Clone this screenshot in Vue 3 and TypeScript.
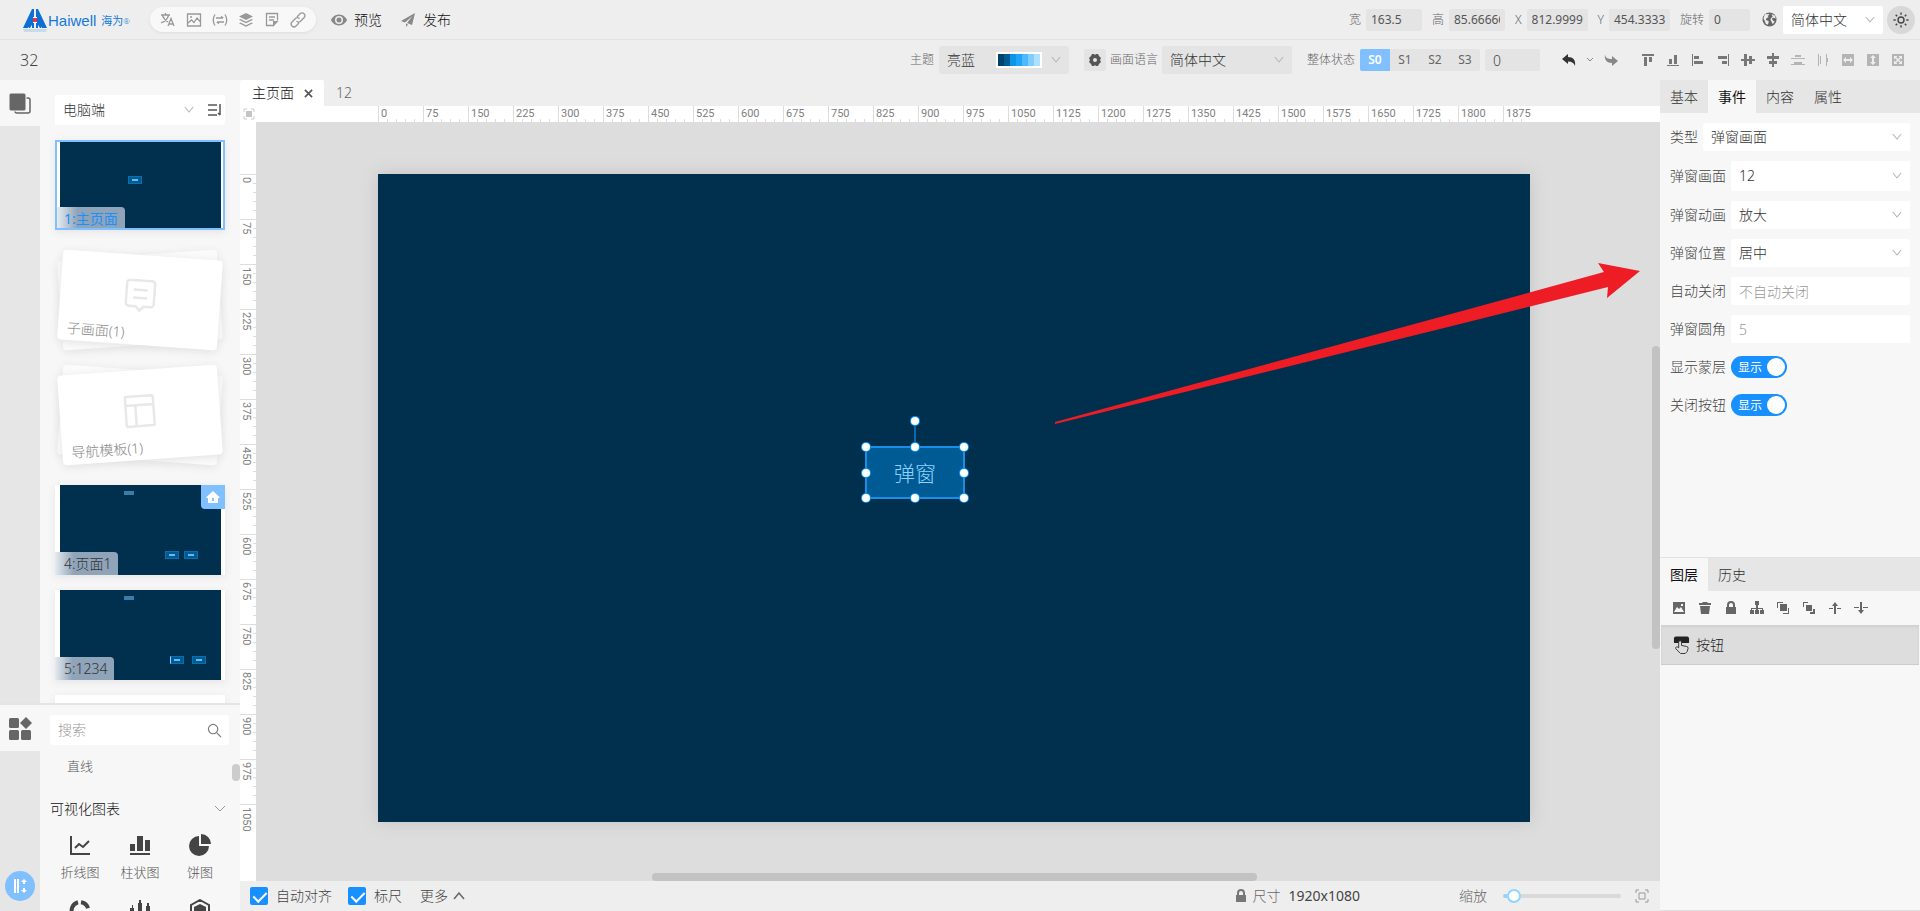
<script setup lang="ts">
import { ref } from 'vue'

interface Field { id: string; label: string; value: string; size: string }
interface Glyph { name: string; d: string; faint?: boolean }
interface Widget { x: number; y: number; width: number; height: number; text: string }

const geometry: Field[] = [
  { id: 'w', label: '宽', value: '163.5', size: 'mid' },
  { id: 'h', label: '高', value: '85.66666', size: 'mid' },
  { id: 'x', label: 'X', value: '812.9999', size: 'wide' },
  { id: 'y', label: 'Y', value: '454.3333', size: 'wide' },
  { id: 'r', label: '旋转', value: '0', size: 'slim' },
]

const states = ['S0', 'S1', 'S2', 'S3']
const activeState = ref('S0')

const swatch = ['#00426e', '#005b94', '#0a95e6', '#1fa5f8', '#4db8fd', '#80cdff', '#ade2ff']

const alignTools: Glyph[] = [
  { name: '顶端对齐', d: 'M2 2h12v2H2zM4 5h3v9H4zM9 5h3v5H9z' },
  { name: '底端对齐', d: 'M2 13h12v1H2zM4 7h3v5H4zM9 3h3v9H9z' },
  { name: '左对齐', d: 'M2 2h1v12H2zM4 4h5v3H4zM4 9h9v3H4z' },
  { name: '右对齐', d: 'M13 2h1v12h-1zM3 4h9v3H3zM7 9h5v3H7z' },
  { name: '垂直居中', d: 'M1 7h3V2h3v5h2V4h3v3h3v2h-3v3H9V9H7v5H4V9H1z' },
  { name: '水平居中', d: 'M7 1h2v3h5v3H9v2h3v3H9v3H7v-3H4V9h3V7H2V4h5z' },
  { name: '纵向分布', d: 'M5 3h6v2H5zM1 6h14v1H1zM4 10h8v2H4zM1 12h14v1H1z', faint: true },
  { name: '横向分布', d: 'M3 2h1v12H3zM5 4h1v8H5zM11 2h1v4h1v4h-1v4h-1z', faint: true },
  { name: '等宽', d: 'M2 2h12v12H2zM3 8l3 3V9h4v2l3-3-3-3v2H6V5z', faint: true },
  { name: '等高', d: 'M2 2h12v12H2zM8 3L5 6h2v4H5l3 3 3-3H9V6h2z', faint: true },
  { name: '等大小', d: 'M2 2h12v12H2zM4 4v3h1V6l2 2-2 2V9H4v3h3v-1H6l2-2 2 2H9v1h3V9h-1v1L9 8l2-2v1h1V4H9v1h1L8 7 6 5h1V4z', faint: true },
]

const layerTools: Glyph[] = [
  { name: '图片', d: 'M2 2h12v12H2zM3 12h10l-3-5-2 2-2-2zM10 4v2h2V4z' },
  { name: '删除', d: 'M3 6h10l-1 8H4zM2 3h3l1-1h4l1 1h3v2H2z' },
  { name: '锁定', d: 'M3 7h1V5a4 4 0 0 1 8 0v2h1v7H3zM6 7h4V5a2 2 0 0 0-4 0z' },
  { name: '组合', d: 'M6 1h4v4H9v3h5v2h1v4h-4v-4h2V9H9v1h1v4H6v-4h1V9H3v1h2v4H1v-4h1V8h5V5H6z' },
  { name: '置顶', d: 'M2 2h6v1H3v5H2zM5 4h7v7H5zM13 8h1v6H8v-1h5z' },
  { name: '置底', d: 'M2 2h5v1H3v4H2zM5 5h6v6H5zM12 9h2v5H9v-2h3z' },
  { name: '上移', d: 'M8 2l3 4H9v8H7V6H5zM2 8h4v1H2zM10 8h4v1h-4z' },
  { name: '下移', d: 'M8 14l3-4H9V2H7v8H5zM1 7h5v1H1zM10 7h5v1h-5z' },
]

const columns = Array.from({ length: 26 }, (_, i) => i * 75)
const rows = Array.from({ length: 15 }, (_, i) => i * 75)

const zoomScale = 0.6
const widget: Widget = { x: 812.9999, y: 454.3333, width: 163.5, height: 85.66666, text: '弹窗' }
const widgetStyle = {
  left: `${Math.round(widget.x * zoomScale)}px`,
  top: `${Math.round(widget.y * zoomScale)}px`,
  width: `${Math.round(widget.width * zoomScale)}px`,
  height: `${Math.round(widget.height * zoomScale)}px`,
}
const handles = ['nw', 'n', 'ne', 'w', 'e', 'sw', 's', 'se']

const choices = [
  { id: 'type', label: '类型', value: '弹窗画面' },
  { id: 'screen', label: '弹窗画面', value: '12', tall: true },
  { id: 'anim', label: '弹窗动画', value: '放大' },
  { id: 'pos', label: '弹窗位置', value: '居中' },
]
const texts = [
  { id: 'close', label: '自动关闭', hint: '不自动关闭' },
  { id: 'radius', label: '弹窗圆角', hint: '5' },
]
const switches = [
  { id: 'mask', label: '显示蒙层' },
  { id: 'closer', label: '关闭按钮' },
]
const zoom = ref(4)
</script>

<template>
  <div class="app">
    <header class="bar top">
      <div class="logo">
        <svg class="mark" viewBox="0 0 24 26">
          <path d="M9 1h2v19H9v-6l-4 6H0zM15 1h-2v19h2v-6l4 6h5z" fill="#0b6fd6" />
          <path d="M9 9h1v6l-3 5H6V14zM15 9h-1v6l3 5h1V14z" fill="#0b6fd6" />
          <path d="M10 9h4v6h-4z" fill="#fff" />
          <path d="M10 10h4v4h-4z" fill="#e8323c" />
          <path d="M0 21h24l-1 3H1z" fill="#0b76dc" opacity=".16" />
        </svg>
        <span class="brand">Haiwell</span><span class="brand-cn">海为</span><sup class="reg">®</sup>
      </div>
      <nav class="pill" aria-label="工具">
        <button type="button" aria-label="翻译"><svg class="i16" viewBox="0 0 16 16"><path class="ln" d="M1 3h9M5.500 1v2M2.500 3.500c1 3 3 5 5.500 6.500M8.500 3.500C7.500 7 5 9.500 1 11M8 14l3-7.500 3 7.500M9 12h4.500" /></svg></button>
        <button type="button" aria-label="图片"><svg class="i16" viewBox="0 0 16 16"><path class="ln" d="M1.500 2h13v12h-13zM2 11l3.500-3 2.500 2.500L11 6l3.500 4" /><circle cx="5" cy="5" r="1" class="fl" /></svg></button>
        <button type="button" aria-label="变量"><svg class="i16" viewBox="0 0 16 16"><path class="ln" d="M3 2.500Q-.5 8 3 13.500M13 2.500Q16.500 8 13 13.500M4 6h7M5 10h7" /><path class="fl" d="M9 3.500l3 2.500H9zM7 12.500L4 10h3z" /></svg></button>
        <button type="button" aria-label="图层"><svg class="i16" viewBox="0 0 16 16"><path class="fl" d="M8 1l7 3.500-7 3.500-7-3.500zM2.500 7L8 9.700 13.500 7l1.500.8-7 3.500-7-3.500zM2.500 10.500L8 13.200l5.500-2.700 1.500.8-7 3.500-7-3.500z" /></svg></button>
        <button type="button" aria-label="文档"><svg class="i16" viewBox="0 0 16 16"><path class="ln" d="M9 13.500H2.500v-12h11v7M5 5h6M5 8h5" /><path class="fl" d="M9 9h5.500L9 15z" /></svg></button>
        <button type="button" aria-label="链接"><svg class="i16" viewBox="0 0 16 16"><path class="ln" d="M7 5l3-3.200a2.600 2.600 0 0 1 4 4L10.500 9.300a2.600 2.600 0 0 1-4-.3M9 11l-3 3a2.600 2.600 0 0 1-4-4l3.500-3.500a2.600 2.600 0 0 1 4 .3" /></svg></button>
      </nav>
      <button type="button" class="act">
        <svg class="i16" viewBox="0 0 16 16"><path class="fl" fill-rule="evenodd" d="M8 2.500c4 0 7 3 8 5.500-1 2.500-4 5.500-8 5.500S1 10.500 0 8c1-2.500 4-5.500 8-5.500zM8 4a4 4 0 1 0 0 8 4 4 0 0 0 0-8zM8 5.500a2.500 2.500 0 1 1 0 5 2.500 2.500 0 0 1 0-5z" /></svg>预览
      </button>
      <button type="button" class="act">
        <svg class="i16" viewBox="0 0 16 16"><path class="fl" d="M15 1L1 9l4 1.500L12.500 4 7 11l5 2zM6 11.500V15l2-2.500z" /></svg>发布
      </button>
      <div class="push geo">
        <div v-for="g in geometry" :key="g.id" class="pair">
          <label :for="'g-' + g.id">{{ g.label }}</label>
          <input :id="'g-' + g.id" :class="g.size" type="text" :value="g.value" />
        </div>
      </div>
      <svg class="i16 globe" viewBox="0 0 16 16"><circle cx="8" cy="8" r="7.500" fill="#666" /><path d="M3 2.500l4-.5 1 1-2 1 1 1.500-2 1-1 2 3 1v2l-1 2-2-1-1-3-1.500-2.500zM10 2l4 2 .5 3-2-1-2 1 1 2 2 1-2 3-1.500-3-1-2 1-2 1.500-1z" fill="#eee" /></svg>
      <div class="sel lang"><select aria-label="界面语言"><option>简体中文</option></select><svg class="chev" viewBox="0 0 12 8"><path d="M1 1l5 6 5-6" /></svg></div>
      <button type="button" class="sun" aria-label="主题模式"><svg class="i16" viewBox="0 0 16 16"><circle cx="8" cy="8" r="3" class="ln" /><path class="ln" d="M8 .5v2.200M8 13.300v2.200M.5 8h2.200M13.300 8h2.200M2.700 2.700l1.500 1.500M11.800 11.800l1.500 1.500M13.300 2.700l-1.500 1.500M4.200 11.800l-1.500 1.500" /></svg></button>
    </header>

    <div class="bar second">
      <span class="project">32</span>
      <div class="pair theme push">
        <label for="theme">主题</label>
        <div class="sel grey box130"><select id="theme"><option>亮蓝</option></select>
          <span class="swatch"><i v-for="c in swatch" :key="c" :style="{ background: c }"></i></span>
          <svg class="chev" viewBox="0 0 12 8"><path d="M1 1l5 6 5-6" /></svg></div>
      </div>
      <div class="pair screenlang">
        <button type="button" class="gear" aria-label="语言设置"><svg viewBox="0 0 12 12"><path fill="#555" fill-rule="evenodd" d="M3 0h2l1 1 1-1h2l1 2 2 2-1 2 1 2-2 2-1 2H7l-1-1-1 1H3l-1-2-2-2 1-2-1-2 2-2zM6 4a2 2 0 1 0 0 4 2 2 0 0 0 0-4z" /></svg></button>
        <label for="slang">画面语言</label>
        <div class="sel grey box130"><select id="slang"><option>简体中文</option></select><svg class="chev" viewBox="0 0 12 8"><path d="M1 1l5 6 5-6" /></svg></div>
      </div>
      <div class="pair state">
        <label for="statenum">整体状态</label>
        <div class="segs">
          <button v-for="s in states" :key="s" type="button" :class="{ on: s === activeState }" @click="activeState = s">{{ s }}</button>
        </div>
        <input id="statenum" type="text" value="0" />
      </div>
      <div class="history">
        <button type="button" aria-label="撤销"><svg class="i16" viewBox="0 0 16 16"><path fill="#333" d="M7 2v3c5 0 8 3 7 9-1-3-3-4.500-7-4.500V12L1 7z" /></svg></button>
        <svg class="tiny" viewBox="0 0 8 6"><path d="M1 1l3 3 3-3" /></svg>
        <button type="button" aria-label="重做"><svg class="i16" viewBox="0 0 16 16"><path fill="#888" d="M2 2c0 4 3 5 7 5V4l6 5-6 5v-3C4 11 1 8 2 2z" /></svg></button>
      </div>
      <div class="aligns">
        <button v-for="t in alignTools" :key="t.name" type="button" :aria-label="t.name" :class="{ faint: t.faint }"><svg class="i16" viewBox="0 0 16 16"><path fill-rule="evenodd" :d="t.d" /></svg></button>
      </div>
    </div>

    <main class="body">
      <aside class="left">
        <section class="pages">
          <div class="rail"><button type="button" class="railtab" aria-label="页面"><svg viewBox="0 0 24 24"><rect x="7" y="7" width="15" height="15" rx="2" fill="none" stroke="#666" stroke-width="1.500" /><rect x="1" y="2" width="17" height="18" rx="2" fill="#666" stroke="#f7f7f7" /></svg></button></div>
          <div class="pane">
            <div class="picker">
              <div class="sel"><select aria-label="终端"><option>电脑端</option></select><svg class="chev" viewBox="0 0 12 8"><path d="M1 1l5 6 5-6" /></svg></div>
              <button type="button" aria-label="排序"><svg viewBox="0 0 14 12"><path d="M0 1h9M0 6h9M0 11h9M12 0v11M12 11l-2-2" fill="none" stroke="#555" stroke-width="1.500" /></svg></button>
            </div>
            <div class="list">
              <div class="thumb chosen"><div class="shot"><i class="chip mid"></i></div><span class="tag">1:主页面</span></div>
              <div class="stacks">
                <div class="stack">
                  <div class="card back ccw"></div>
                  <div class="card cw"><svg class="cardicon" viewBox="0 0 32 34"><path d="M5 1.500h22a3 3 0 0 1 3 3v20a3 3 0 0 1-3 3h-7l-4 4-4-4H5a3 3 0 0 1-3-3v-20a3 3 0 0 1 3-3zM9 11h14M9 19h14" /></svg><span>子画面(1)</span></div>
                </div>
                <div class="stack">
                  <div class="card back cw"></div>
                  <div class="card ccw"><svg class="cardicon" viewBox="0 0 32 34"><path d="M3 2h26a1 1 0 0 1 1 1v28a1 1 0 0 1-1 1H3a1 1 0 0 1-1-1V3a1 1 0 0 1 1-1zM2 11h28M12 11v21" /></svg><span>导航模板(1)</span></div>
                </div>
              </div>
              <div class="thumb"><div class="shot"><i class="chip head"></i><i class="chip a4"></i><i class="chip b4"></i></div><span class="tag">4:页面1</span><span class="home"><svg viewBox="0 0 16 16"><path fill="#fff" fill-rule="evenodd" d="M8 2L1.500 8v1H3v5h10V9h1.500V8zM7 9v3h2V9z" /></svg></span></div>
              <div class="thumb"><div class="shot"><i class="chip head"></i><i class="chip a5"></i><i class="chip b5"></i></div><span class="tag">5:1234</span></div>
              <div class="thumb"></div>
            </div>
          </div>
        </section>
        <section class="library">
          <div class="rail"><button type="button" class="railtab" aria-label="组件"><svg viewBox="0 0 24 24" fill="#666"><rect x="1" y="2" width="10" height="10" rx="1.500" /><rect x="1" y="14" width="10" height="10" rx="1.500" /><rect x="13" y="14" width="10" height="10" rx="1.500" /><path d="M18 1l6 6-6 6-6-6z" /></svg></button>
            <button type="button" class="dock" aria-label="展开"><svg viewBox="0 0 16 16"><path fill="#fff" d="M2 1h2v14H2zM5 1h2v14H5zM12 1l3 3h-2v2h-2V4H9zM12 15l3-3h-2v-2h-2v2H9z" /></svg></button></div>
          <div class="pane">
            <div class="search"><input type="text" aria-label="搜索" placeholder="搜索" /><svg viewBox="0 0 16 16"><circle cx="6.500" cy="6.500" r="5" /><path d="M10.500 10.500l4.500 4.500" /></svg></div>
            <div class="line-item">直线</div>
            <div class="group"><span>可视化图表</span><svg viewBox="0 0 12 8"><path d="M1 1l5 5 5-5" /></svg></div>
            <div class="charts">
              <button type="button"><svg viewBox="0 0 22 22"><path fill="none" stroke="#444" stroke-width="2" d="M2 2v18h19M6 14l4-4 4 3 6-6" /></svg>折线图</button>
              <button type="button"><svg viewBox="0 0 22 22"><path fill="#444" d="M1 19h20v2H1zM1 10h5v7H1zM8 2h6v15H8zM16 6h5v11h-5z" /></svg>柱状图</button>
              <button type="button"><svg viewBox="0 0 22 22"><path fill="#444" d="M10 2v10h10A10 10 0 1 1 10 2zM12 0a10 10 0 0 1 10 10H12z" /></svg>饼图</button>
              <button type="button" aria-label="环图"><svg viewBox="0 0 22 22"><path fill="none" stroke="#444" stroke-width="4" d="M9 3.200A8.500 8.500 0 0 0 4 16M12 3.200a8.500 8.500 0 0 1 7 6" /></svg></button>
              <button type="button" aria-label="K线图"><svg viewBox="0 0 22 22"><path fill="#444" d="M1 9h4v10H1zM3 6h1v3H3zM9 4h4v13H9zM10 1h2v3h-2zM17 7h4v10h-4zM18 4h2v3h-2z" /></svg></button>
              <button type="button" aria-label="雷达图"><svg viewBox="0 0 22 22"><path fill="none" stroke="#444" stroke-width="2" d="M11 1l9 5v11l-9 5-9-5V6z" /><path fill="#444" d="M11 5l6 3v7l-6 3-6-3V8z" /></svg></button>
            </div>
            <i class="scroll"></i>
          </div>
        </section>
      </aside>

      <section class="center">
        <div class="tabs">
          <button type="button" class="tab on">主页面<svg viewBox="0 0 10 10"><path d="M1 1l8 8M9 1L1 9" /></svg></button>
          <button type="button" class="tab">12</button>
        </div>
        <div class="work">
          <svg class="corner" viewBox="0 0 12 12"><path d="M1 4V1h3M8 1h3v3M11 8v3H8M4 11H1V8" fill="none" stroke="#ccc" /><path d="M3 3h6v6H3z" fill="#c4c4c4" /></svg>
          <div class="ruler-x"><span v-for="n in columns" :key="n" class="seg">{{ n }}</span></div>
          <div class="ruler-y"><span v-for="n in rows" :key="n" class="seg">{{ n }}</span></div>
          <div class="stage">
            <div class="board">
              <div class="widget" :style="widgetStyle">{{ widget.text }}
                <i class="stem"></i><i class="knob rot"></i>
                <i v-for="h in handles" :key="h" class="knob" :class="h"></i>
              </div>
              <svg class="pointer" viewBox="0 0 1270 300"><path fill="#ee1c24" d="M1262 97l-42-8 6 9-164 45L677 248v2l385-95 168-42-1 11z" /></svg>
            </div>
            <i class="vbar"></i><i class="hbar"></i>
          </div>
        </div>
        <footer class="foot">
          <label class="check"><input type="checkbox" checked />自动对齐</label>
          <label class="check"><input type="checkbox" checked />标尺</label>
          <button type="button" class="more">更多<svg viewBox="0 0 12 8"><path d="M1 7l5-6 5 6" /></svg></button>
          <div class="size push"><svg viewBox="0 0 12 14"><path fill="#777" fill-rule="evenodd" d="M1 6h1V4a4 4 0 0 1 8 0v2h1v7H1zM4 6h4V4a2 2 0 0 0-4 0z" /></svg><span>尺寸</span><b>1920x1080</b></div>
          <label class="zoomlabel" for="zoom">缩放</label>
          <input id="zoom" v-model="zoom" class="slider" type="range" min="0" max="100" />
          <button type="button" class="fit" aria-label="适应窗口"><svg viewBox="0 0 14 14"><path d="M1 4V1h3M10 1h3v3M13 10v3h-3M4 13H1v-3M4 4h6v6H4z" fill="none" stroke="#999" /></svg></button>
        </footer>
      </section>

      <aside class="right">
        <section class="props">
          <div class="rtabs"><button type="button">基本</button><button type="button" class="on">事件</button><button type="button">内容</button><button type="button">属性</button></div>
          <div class="form">
            <div v-for="c in choices" :key="c.id" class="row" :class="{ tall: c.tall }">
              <label :for="'c-' + c.id">{{ c.label }}</label>
              <div class="sel"><select :id="'c-' + c.id"><option>{{ c.value }}</option></select><svg class="chev" viewBox="0 0 12 8"><path d="M1 1l5 6 5-6" /></svg></div>
            </div>
            <div v-for="t in texts" :key="t.id" class="row">
              <label :for="'t-' + t.id">{{ t.label }}</label>
              <input :id="'t-' + t.id" type="text" :placeholder="t.hint" />
            </div>
            <div v-for="s in switches" :key="s.id" class="row">
              <label :for="'s-' + s.id">{{ s.label }}</label>
              <span class="switch"><input :id="'s-' + s.id" type="checkbox" role="switch" checked /><em>显示</em></span>
            </div>
          </div>
        </section>
        <section class="layers">
          <div class="rtabs"><button type="button" class="on">图层</button><button type="button">历史</button></div>
          <div class="ltools"><button v-for="t in layerTools" :key="t.name" type="button" :aria-label="t.name"><svg class="i16" viewBox="0 0 16 16"><path fill-rule="evenodd" :d="t.d" /></svg></button></div>
          <div class="layer"><svg viewBox="0 0 18 20"><path d="M3 1h12a2 2 0 0 1 2 2v4a1 1 0 0 1-1 1H2a1 1 0 0 1-1-1V3a2 2 0 0 1 2-2z" fill="#222" /><path d="M6 13V7a1.500 1.500 0 0 1 3 0v3.500l5 1a2 2 0 0 1 2 2L15 17l-2 2H8l-5-5c-1-1.500 1-3 3-1z" fill="#ddd" stroke="#333" /></svg>按钮</div>
        </section>
      </aside>
    </main>
  </div>
</template>

<style>
html, body { margin: 0; overflow: hidden; }
</style>

<style scoped>
.app { display: flex; flex-direction: column; height: 100vh; background: #eee; color: #444; font: 14px/20px "Noto Sans", "Noto Sans CJK SC", sans-serif; font-weight: 300; }
.app * { box-sizing: border-box; }
button, input, select { font: inherit; color: inherit; }
button { padding: 0; border: 0; background: none; white-space: nowrap; }
input { border: 0; outline: 0; min-width: 0; border-radius: 2px; }
svg { display: block; flex: none; }
.i16 { width: 16px; height: 16px; }
.push { margin-left: auto; }
.bar { display: flex; align-items: center; height: 40px; flex: none; }
.top { border-bottom: 1px solid #e2e2e2; padding: 0 5px 0 23px; }
.logo { display: flex; align-items: center; width: 127px; color: #1479d8; white-space: nowrap; padding-top: 2px; }
.mark { width: 24px; height: 26px; margin-right: 1px; }
.brand { font: 15px/20px "Liberation Sans", sans-serif; }
.brand-cn { font-size: 11px; font-weight: 400; margin-left: 5px; }
.reg { font-size: 8px; line-height: 8px; }
.pill { display: flex; gap: 10px; padding: 4px 10px; height: 25px; border-radius: 13px; background: #f8f8f8; box-shadow: 0 1px 3px #ddd; margin-right: 15px; }
.ln { fill: none; stroke: #999; stroke-width: 1.3; }
.fl { fill: #999; }
.act { display: flex; align-items: center; gap: 7px; color: #111; margin-right: 18px; line-height: 22px; }
.act .fl { fill: #888; }
.pair { display: flex; align-items: center; gap: 5px; font-size: 12px; color: #666; white-space: nowrap; }
.geo { display: flex; gap: 10px; margin-right: 12px; }
.geo input { height: 22px; padding: 0 5px; background: #e4e4e4; color: #555; font-weight: 400; }
.geo .mid { width: 56px; }
.geo .wide { width: 61px; }
.geo .slim { width: 41px; }
.globe { margin-right: 6px; width: 15px; height: 15px; }
.sel { position: relative; display: flex; flex: 1; min-width: 0; height: 28px; background: #fff; border-radius: 2px; font-size: 14px; color: #333; }
.sel select { width: 100%; height: 100%; appearance: none; border: 0; background: transparent; padding: 0 24px 0 8px; outline: 0; }
.chev { position: absolute; right: 8px; top: 50%; margin-top: -4px; width: 10px; height: 7px; pointer-events: none; fill: none; stroke: #b4b4b4; stroke-width: 1.3; }
.lang { flex: none; width: 100px; margin-right: 4px; }
.sun { display: flex; align-items: center; justify-content: center; width: 28px; height: 28px; border-radius: 50%; background: #d8d8d8; }
.sun .ln { stroke: #444; stroke-width: 1.4; }
.second { padding: 0 14px 0 20px; }
.project { font-size: 16px; color: #444; }
.grey { background: #e4e4e4; }
.box130 { flex: none; width: 130px; }
.swatch { position: absolute; right: 27px; top: 6px; display: flex; border: 2px solid #fff; pointer-events: none; }
.swatch i { width: 6px; height: 12px; }
.theme { margin-right: 15px; }
.screenlang { margin-right: 15px; gap: 4px; }
.gear { display: flex; align-items: center; justify-content: center; width: 22px; height: 22px; border-radius: 2px; background: #e4e4e4; }
.gear svg { width: 12px; height: 12px; }
.segs { display: flex; background: #e4e4e4; border-radius: 2px; overflow: hidden; }
.segs button { width: 30px; height: 22px; font-weight: 400; color: #666; }
.segs .on { background: #80c0ff; color: #fff; font-weight: 600; }
.state input { width: 55px; height: 22px; padding: 0 8px; background: #e4e4e4; font-size: 14px; color: #444; }
.history { display: flex; align-items: center; gap: 9px; margin: 0 21px 0 21px; }
.tiny { width: 8px; height: 6px; fill: none; stroke: #888; }
.aligns { display: flex; gap: 9px; }
.aligns path { fill: #777; }
.aligns .faint path { fill: #b4b4b4; }

.body { flex: 1; min-height: 0; display: flex; }
.left { width: 240px; flex: none; display: flex; flex-direction: column; }
.pages { flex: 1; min-height: 0; display: flex; border-bottom: 2px solid #e4e4e4; }
.library { flex: none; height: 206px; display: flex; }
.rail { width: 40px; flex: none; background: #e6e6e6; display: flex; flex-direction: column; justify-content: space-between; }
.railtab { height: 46px; background: #f7f7f7; display: flex; align-items: center; justify-content: center; }
.railtab svg { width: 24px; height: 24px; }
.dock { width: 30px; height: 30px; margin: 0 5px 10px; border-radius: 50%; background: #80c0ff; display: flex; align-items: center; justify-content: center; }
.dock svg { width: 16px; height: 16px; }
.pane { position: relative; flex: 1; min-width: 0; background: #f7f7f7; overflow: hidden; }
.pages .pane { padding: 15px 15px 0; }
.picker { display: flex; height: 30px; background: #fff; border-radius: 2px; align-items: center; padding-right: 3px; margin-bottom: 15px; }
.picker .sel { height: 30px; }
.picker button svg { width: 14px; height: 12px; }
.picker .sel { margin-right: 6px; }
.list { display: flex; flex-direction: column; gap: 15px; }
.thumb { position: relative; flex: none; height: 90px; background: #fff; box-shadow: 0 2px 8px #e4e4e4; padding: 0 4px 0 5px; overflow: hidden; }
.shot { position: relative; height: 100%; background: #00304d; }
.chosen::after { content: ""; position: absolute; inset: 0; border: 2px solid #80c0ff; }
.tag { position: absolute; left: 0; bottom: 0; height: 23px; padding: 0 7px 0 9px; line-height: 23px; color: #333; border-radius: 0 4px 0 0; background: linear-gradient(90deg, #e6ebef 0, #8fa4b8 30%); }
.chosen .tag { left: 2px; bottom: 2px; height: 21px; padding-left: 7px; color: #1890ff; font-weight: 400; }
.chip { position: absolute; width: 14px; height: 8px; background: #005b94; border: 1px solid #0a70ac; }
.chip::after { content: ""; position: absolute; inset: 2px 3px; background: #6ab8ec; }
.chip.mid { left: 68px; top: 36px; }
.chip.head { left: 64px; top: 6px; width: 10px; height: 4px; background: #3b7da8; border: 0; }
.chip.head::after { display: none; }
.chip.a4 { right: 42px; bottom: 16px; }
.chip.b4 { right: 23px; bottom: 16px; }
.chip.a5 { right: 37px; bottom: 16px; border-left-color: #8fd2ff; }
.chip.b5 { right: 15px; bottom: 16px; }
.home { position: absolute; right: 0; top: 0; width: 24px; height: 24px; padding: 4px; background: #80c0ff; border-radius: 0 0 0 4px; }
.home svg { width: 16px; height: 16px; }
.stacks { display: flex; flex-direction: column; gap: 15px; padding: 5px 0; }
.stack { display: grid; height: 100px; align-items: center; justify-items: center; }
.card { grid-area: 1 / 1; position: relative; width: 160px; height: 90px; border-radius: 4px; background: #fff; box-shadow: 0 2px 8px #e2e2e2; color: #888; display: flex; align-items: center; justify-content: center; }
.card.back { background: #fbfbfb; }
.card.cw { transform: rotate(4deg); }
.card.ccw { transform: rotate(-4deg); }
.card span { position: absolute; left: 9px; bottom: 2px; }
.cardicon { width: 32px; height: 34px; margin-bottom: 8px; fill: none; stroke: #e8e8e8; stroke-width: 2.5; }
.search { display: flex; align-items: center; height: 30px; background: #fff; border-radius: 2px; margin: 10px 11px 0 10px; padding: 0 7px 0 8px; }
.search input { flex: 1; padding: 0; background: transparent; }
input::placeholder { color: #999; opacity: 1; }
.search svg { width: 15px; height: 15px; fill: none; stroke: #777; stroke-width: 1.2; }
.line-item { font-size: 13px; margin: 11px 0 0 27px; color: #555; }
.group { display: flex; justify-content: space-between; align-items: center; margin: 23px 14px 0 10px; color: #111; }
.group svg { width: 12px; height: 8px; fill: none; stroke: #999; }
.charts { display: grid; grid-template-columns: repeat(3, 60px); margin: 15px 0 0 10px; row-gap: 16px; }
.charts button { display: flex; flex-direction: column; align-items: center; font-size: 13px; gap: 5px; color: #555; line-height: 22px; }
.charts svg { width: 22px; height: 22px; }
.scroll { position: absolute; right: 0; top: 59px; width: 8px; height: 17px; border-radius: 4px; background: #ccc; }

.center { flex: 1; min-width: 0; display: flex; flex-direction: column; }
.tabs { display: flex; height: 26px; flex: none; }
.tab { display: flex; align-items: center; gap: 10px; padding: 0 12px; color: #666; }
.tab.on { background: #fff; color: #111; padding-right: 11px; border-radius: 2px 2px 0 0; }
.tab svg { width: 9px; height: 9px; fill: none; stroke: #555; stroke-width: 1.800; }
.work { flex: 1; min-height: 0; display: grid; grid-template-columns: 16px minmax(0, 1fr); grid-template-rows: 16px minmax(0, 1fr); background: #fff; }
.corner { width: 12px; height: 12px; margin: 2px 0 0 3px; }
.ruler-x { display: flex; padding-left: 122px; overflow: hidden; }
.ruler-y { display: flex; flex-direction: column; padding-top: 52px; overflow: hidden; }
.seg { flex: none; font: 400 11px/16px Roboto, sans-serif; color: #808080; }
.ruler-x .seg { width: 45px; padding-left: 3px; background: linear-gradient(#ddd, #ddd) 0 0 / 1px 100% no-repeat, repeating-linear-gradient(90deg, #ddd 0 1px, transparent 1px 9px) 0 100% / 100% 3px no-repeat; }
.ruler-x .seg:last-child { width: 27px; overflow: visible; }
.ruler-y .seg { height: 45px; padding-top: 3px; writing-mode: vertical-rl; line-height: 13px; padding-right: 3px; background: linear-gradient(#ddd, #ddd) 0 0 / 100% 1px no-repeat, repeating-linear-gradient(#ddd 0 1px, transparent 1px 9px) 100% 0 / 3px 100% no-repeat; }
.ruler-y .seg:last-child { background: linear-gradient(#ddd, #ddd) 0 0 / 100% 1px no-repeat; }
.stage { position: relative; overflow: hidden; background: #ddd; padding: 52px 0 0 122px; }
.board { position: relative; width: 1152px; aspect-ratio: 16 / 9; background: #00304d; box-shadow: 0 0 16px #c4c4c4; }
.widget { position: absolute; display: flex; align-items: center; justify-content: center; background: #005b94; outline: 2px solid #1a8fe8; outline-offset: -1px; color: #8fd2ff; font-size: 21px; line-height: 24px; }
.stem { position: absolute; left: 50%; bottom: 100%; width: 2px; margin-left: -1px; height: 26px; background: #0a68ac; }
.knob { position: absolute; width: 8px; height: 8px; margin: -4px; border-radius: 50%; background: #fff; box-shadow: 0 0 0 1px #0a95ff; }
.rot { left: 50%; top: -26px; }
.nw { left: 0; top: 0; }
.n { left: 50%; top: 0; }
.ne { left: 100%; top: 0; }
.w { left: 0; top: 50%; }
.e { left: 100%; top: 50%; }
.sw { left: 0; top: 100%; }
.s { left: 50%; top: 100%; }
.se { left: 100%; top: 100%; }
.pointer { position: absolute; left: 0; top: 0; width: 1270px; height: 300px; pointer-events: none; }
.vbar { position: absolute; right: 0; top: 224px; width: 8px; height: 303px; border-radius: 4px; background: #c2c2c2; }
.hbar { position: absolute; bottom: 0; left: 396px; width: 605px; height: 8px; border-radius: 4px; background: #c2c2c2; }
.foot { height: 30px; flex: none; display: flex; align-items: center; padding: 0 11px 0 10px; background: #eee; }
.check { display: flex; align-items: center; gap: 8px; margin-right: 16px; }
.check input { position: relative; appearance: none; width: 18px; height: 18px; margin: 0; background: #1890ff; border-radius: 2px; }
.check input::after { content: ""; position: absolute; left: 6px; top: 2px; width: 6px; height: 11px; border: solid #fff; border-width: 0 2px 2px 0; transform: rotate(45deg); }
.more { display: flex; align-items: center; gap: 5px; margin-left: 2px; }
.more svg { width: 12px; height: 8px; fill: none; stroke: #666; stroke-width: 1.500; }
.size { display: flex; align-items: center; color: #666; margin-right: 99px; }
.size svg { width: 12px; height: 14px; margin-right: 6px; }
.size b { margin-left: 8px; font-weight: 400; color: #444; }
.zoomlabel { color: #666; margin-right: 16px; }
.slider { appearance: none; width: 118px; height: 4px; margin: 0 14px 0 0; border-radius: 2px; background: linear-gradient(90deg, #91d5ff 4px, #d9d9d9 4px); }
.slider::-webkit-slider-thumb { appearance: none; width: 14px; height: 14px; border-radius: 50%; background: #fff; border: 2px solid #91d5ff; }
.fit svg { width: 14px; height: 14px; }

.right { width: 260px; flex: none; background: #f7f7f7; display: flex; flex-direction: column; border-bottom: 1px solid #e0e0e0; }
.props { flex: 1; min-height: 0; }
.layers { flex: none; height: 43%; min-height: 200px; max-height: 353px; border-top: 1px solid #e2e2e2; }
.rtabs { display: flex; height: 33px; background: #e6e6e6; }
.rtabs button { padding: 0 10px; color: #333; }
.rtabs .on { background: #f7f7f7; color: #111; font-weight: 400; }
.form { display: flex; flex-direction: column; gap: 10px; padding: 10px; }
.row { display: flex; align-items: center; gap: 5px; height: 28px; }
.row.tall, .tall .sel { height: 30px; }
.row > label { white-space: nowrap; }
.row > input { flex: 1; height: 28px; padding: 0 8px; background: #fff; }
.switch { position: relative; width: 56px; height: 22px; }
.switch input { appearance: none; width: 56px; height: 22px; margin: 0; border-radius: 11px; background: #1890ff; }
.switch input::after { content: ""; position: absolute; right: 2px; top: 2px; width: 18px; height: 18px; border-radius: 50%; background: #fff; }
.switch em { position: absolute; left: 7px; top: 0; font: 400 12px/22px "Noto Sans CJK SC", sans-serif; color: #fff; pointer-events: none; }
.ltools { display: flex; gap: 10px; height: 34px; align-items: center; padding: 0 11px; }
.ltools path { fill: #666; }
.layer { display: flex; align-items: center; gap: 6px; height: 40px; margin: 0 1px; padding-left: 12px; background: #ddd; border-bottom: 1px solid #ccc; box-shadow: inset 0 2px 3px #d0d0d0; color: #222; }
.layer svg { width: 17px; height: 20px; }
</style>
